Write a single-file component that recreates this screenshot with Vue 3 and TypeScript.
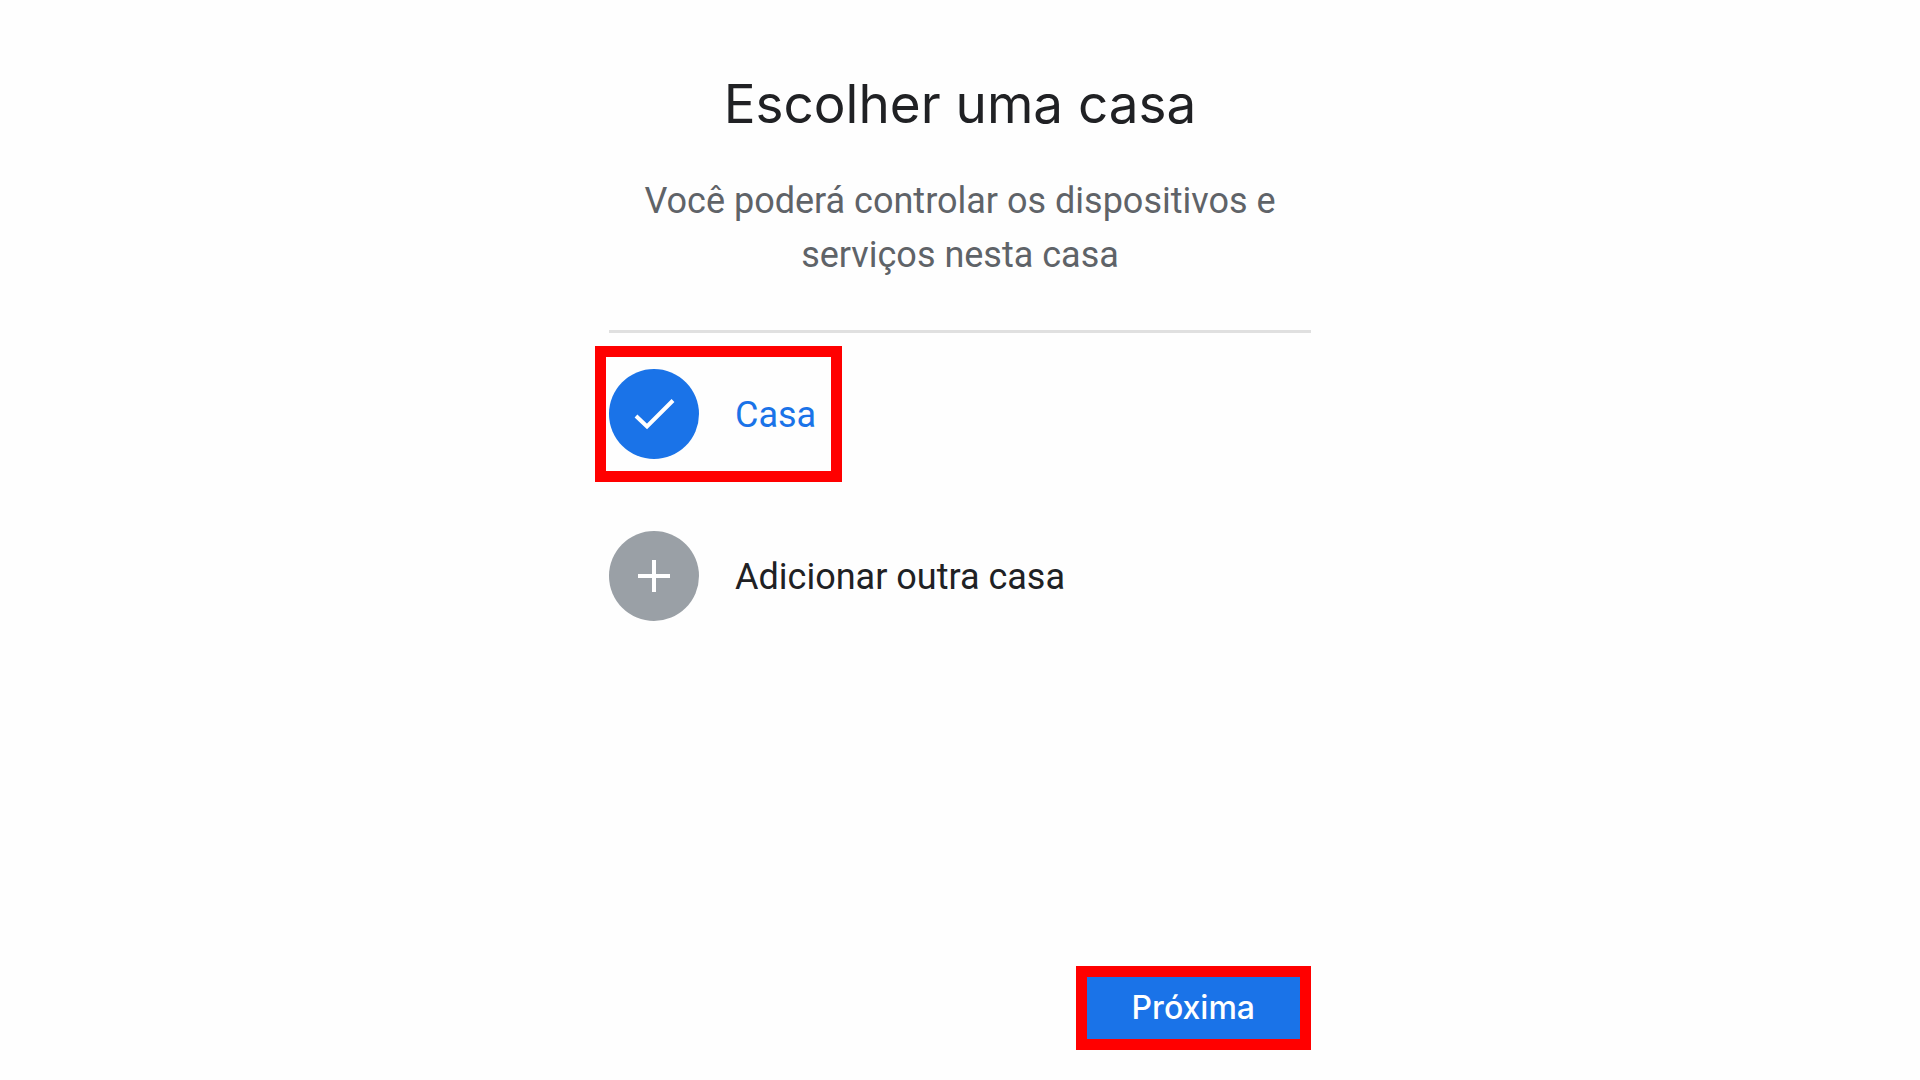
<script setup lang="ts">
import { ref } from 'vue'

interface HomeOption {
  id: string
  label: string
  icon: string
}

const options: HomeOption[] = [
  { id: 'casa', label: 'Casa', icon: 'M6 26 L17 36.5 L43 10.5' },
  { id: 'nova', label: 'Adicionar outra casa', icon: 'M24 8 V40 M8 24 H40' },
]

const selected = ref('casa')
</script>

<template>
  <main class="page">
    <form class="panel" @submit.prevent>
      <h1 class="title">Escolher uma casa</h1>
      <p class="subtitle">Você poderá controlar os dispositivos e serviços nesta casa</p>
      <fieldset class="options" aria-label="Casas">
        <label
          v-for="option in options"
          :key="option.id"
          class="option"
          :class="{ selected: selected === option.id }"
          :for="option.id"
        >
          <span class="badge">
            <input :id="option.id" v-model="selected" class="radio" type="radio" name="home" :value="option.id" />
            <svg class="icon" viewBox="0 0 48 48" aria-hidden="true">
              <path :d="option.icon" fill="none" stroke="#fff" stroke-width="4" />
            </svg>
          </span>
          <span class="name">{{ option.label }}</span>
        </label>
      </fieldset>
      <button class="next" type="submit">Próxima</button>
    </form>
  </main>
</template>

<style>
body {
  margin: 0;
  background: #fefefe;
}
</style>

<style scoped>
.page {
  box-sizing: border-box;
  min-height: 100vh;
  display: flex;
  justify-content: center;
  padding: 72px 24px 30px;
  font-family: Roboto, sans-serif;
  color: #202124;
}

.panel {
  width: 100%;
  max-width: 702px;
  display: flex;
  flex-direction: column;
}

.title {
  margin: 0;
  font: 400 53px/64px Inter, sans-serif;
  text-align: center;
}

.subtitle {
  margin: 38px 0 0;
  padding: 0 24px 48px;
  border-bottom: 3px solid #e0e0e0;
  font-size: 36px;
  line-height: 54px;
  text-align: center;
  color: #5f6368;
}

.options {
  margin: 0;
  padding: 36px 0;
  border: 0;
  display: flex;
  flex-direction: column;
  align-items: flex-start;
  gap: 72px;
}

.option {
  position: relative;
  display: flex;
  align-items: center;
  gap: 36px;
  font-size: 36px;
  line-height: 48px;
  cursor: pointer;
}

.selected {
  color: #1a73e8;
}

.selected::after {
  content: '';
  position: absolute;
  inset: -23px -26px -23px -14px;
  border: 11px solid #f00;
  pointer-events: none;
}

.name {
  padding-top: 2px;
}

.badge {
  display: grid;
  place-items: center;
}

.radio,
.icon {
  grid-area: 1 / 1;
}

.radio {
  appearance: none;
  width: 90px;
  height: 90px;
  margin: 0;
  border-radius: 50%;
  background: #9aa0a6;
}

.radio:checked {
  background: #1a73e8;
}

.icon {
  width: 48px;
  height: 48px;
  pointer-events: none;
}

.next {
  align-self: flex-end;
  margin-top: auto;
  padding: 12px 45px;
  border: 11px solid #f00;
  background: #1a73e8;
  color: #fff;
  font: 500 32px/38px Inter, sans-serif;
}
</style>
